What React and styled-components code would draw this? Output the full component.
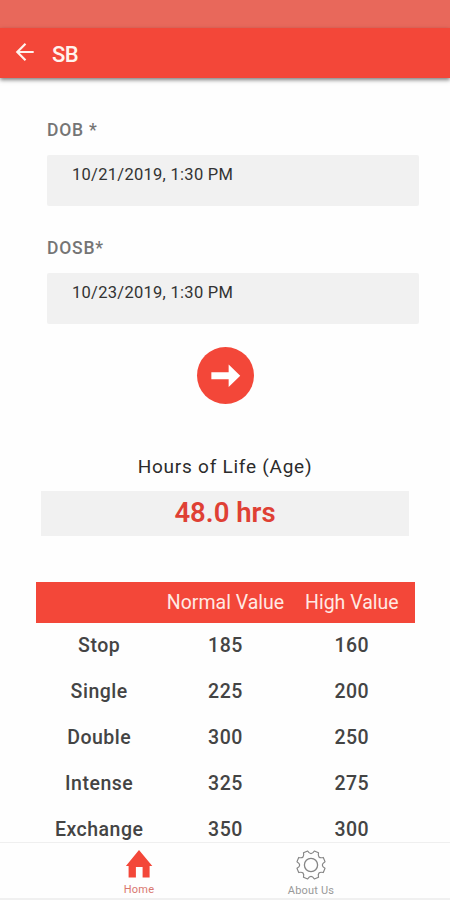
import React from "react";
import styled, { createGlobalStyle } from "styled-components";

const GlobalStyle = createGlobalStyle`
  * {
    box-sizing: border-box;
  }

  body {
    margin: 0;
    background: #fefefe;
    font-family: Roboto, "Liberation Sans", sans-serif;
  }
`;

const Screen = styled.div`
  display: flex;
  flex-direction: column;
  width: 450px;
  height: 900px;
  overflow: hidden;
  background: #fefefe;
`;

const StatusBar = styled.div`
  flex: none;
  height: 28px;
  background: #e8685b;
`;

const Toolbar = styled.header`
  flex: none;
  display: flex;
  align-items: center;
  height: 50px;
  padding-left: 15px;
  background: #f34739;
  box-shadow: 0 2px 4px rgba(0, 0, 0, 0.5);
  color: #fff3ee;

  svg {
    display: block;
    margin-top: -2px;
  }
`;

const Title = styled.h1`
  margin: 3px 0 0 17px;
  font-size: 22px;
  line-height: 26px;
  font-weight: 500;
  letter-spacing: -0.5px;
`;

const Content = styled.main`
  flex: 1;
  min-height: 0;
  overflow: hidden;
  padding-top: 41px;
`;

const Field = styled.div`
  height: 118px;
  padding: 0 31px 0 47px;
`;

const FieldLabel = styled.label`
  display: block;
  height: 36px;
  font-size: 17.5px;
  line-height: 22px;
  font-weight: 500;
  letter-spacing: 0.8px;
  color: #757575;
`;

const FieldValue = styled.div`
  height: 51px;
  padding: 9px 0 0 25px;
  border-radius: 2px;
  background: #f1f1f1;
  font-size: 16.5px;
  line-height: 22px;
  letter-spacing: 0.28px;
  color: #333;
`;

const SubmitButton = styled.button`
  display: block;
  width: 57px;
  height: 57px;
  margin: -8px auto 0;
  padding: 0;
  border: none;
  border-radius: 50%;
  background: #f34739;

  svg {
    display: block;
  }
`;

const ResultLabel = styled.div`
  margin-top: 51px;
  font-size: 19px;
  line-height: 24px;
  letter-spacing: 0.75px;
  text-align: center;
  color: #2b2b2b;
`;

const Result = styled.div`
  height: 45px;
  margin: 12px 41px 0;
  background: #f1f1f1;
  font-size: 27.5px;
  line-height: 43px;
  font-weight: 600;
  text-align: center;
  color: #df4034;
`;

const Table = styled.div`
  margin: 46px 35px 0 36px;
`;

const Row = styled.div`
  display: grid;
  grid-template-columns: repeat(3, 1fr);
  align-items: center;
  height: 45.8px;
  font-size: 19.5px;
  font-weight: 500;
  letter-spacing: 0.5px;
  text-align: center;
  color: #444;
`;

const HeaderRow = styled(Row)`
  height: 41px;
  background: #f34739;
  font-weight: 400;
  letter-spacing: 0;
  color: #ffe9e3;
`;

const TabBar = styled.nav`
  flex: none;
  display: grid;
  grid-template-columns: 1fr 1fr;
  height: 58px;
  padding: 0 53px;
  border-top: 1px solid #efefef;
  border-bottom: 2px solid #f0f0f0;
  background: #fefefe;
`;

const Tab = styled.a`
  display: flex;
  flex-direction: column;
  align-items: center;
  padding-top: ${(props) => (props.$active ? "6px" : "7px")};
  font-size: 11px;
  line-height: 14px;
  letter-spacing: 0.2px;
  color: ${(props) => (props.$active ? "#d9776f" : "#999")};

  svg {
    display: block;
    margin-bottom: 4px;
  }
`;

const rows = [
  { name: "Stop", normal: 185, high: 160 },
  { name: "Single", normal: 225, high: 200 },
  { name: "Double", normal: 300, high: 250 },
  { name: "Intense", normal: 325, high: 275 },
  { name: "Exchange", normal: 350, high: 300 },
];

function BackIcon() {
  return (
    <svg width="20" height="20" viewBox="0 0 20 20" fill="none">
      <path
        d="M18.7 10H2.5M10.5 1.8L2.3 10l8.2 8.2"
        stroke="#fff3ee"
        strokeWidth="2.2"
      />
    </svg>
  );
}

function ArrowIcon() {
  return (
    <svg width="57" height="57" viewBox="0 0 58 58">
      <path d="M14.6 25.6h17.6v-7.8L44 29.2 32.2 40.6v-7.8H14.6z" fill="#fff" />
    </svg>
  );
}

function HomeIcon() {
  return (
    <svg width="28" height="30" viewBox="0 0 28 30">
      <path
        d="M14 1L27.3 17H24.6v11.5h-7V18h-6.7v10.5H3.6V17H.9z"
        fill="#f34739"
      />
    </svg>
  );
}

// Eight shallow teeth around the rim, one notch curve between each pair
function GearIcon() {
  const point = (r, deg) => {
    const a = (deg * Math.PI) / 180;
    return `${(15 + r * Math.cos(a)).toFixed(2)} ${(15 + r * Math.sin(a)).toFixed(2)}`;
  };
  let d = `M${point(14.4, 13.5)}`;
  for (let i = 0; i < 8; i++) {
    const deg = 22.5 + i * 45;
    d += `L${point(14.4, deg + 9)}Q${point(8.6, deg + 22.5)} ${point(14.4, deg + 36)}`;
  }
  return (
    <svg width="30" height="30" viewBox="0 0 30 30" fill="none" stroke="#858585">
      <path d={`${d}Z`} strokeLinejoin="round" strokeWidth="1.2" />
      <circle cx="15" cy="15" r="6.6" strokeWidth="1.3" />
    </svg>
  );
}

export default function App() {
  return (
    <>
      <GlobalStyle />
      <Screen>
        <StatusBar />
        <Toolbar>
          <BackIcon />
          <Title>SB</Title>
        </Toolbar>
        <Content>
          <Field>
            <FieldLabel>DOB *</FieldLabel>
            <FieldValue>10/21/2019, 1:30 PM</FieldValue>
          </Field>
          <Field>
            <FieldLabel>DOSB*</FieldLabel>
            <FieldValue>10/23/2019, 1:30 PM</FieldValue>
          </Field>
          <SubmitButton>
            <ArrowIcon />
          </SubmitButton>
          <ResultLabel>Hours of Life (Age)</ResultLabel>
          <Result>48.0 hrs</Result>
          <Table>
            <HeaderRow>
              <span />
              <span>Normal Value</span>
              <span>High Value</span>
            </HeaderRow>
            {rows.map((row) => (
              <Row key={row.name}>
                <span>{row.name}</span>
                <span>{row.normal}</span>
                <span>{row.high}</span>
              </Row>
            ))}
          </Table>
        </Content>
        <TabBar>
          <Tab $active>
            <HomeIcon />
            Home
          </Tab>
          <Tab>
            <GearIcon />
            About Us
          </Tab>
        </TabBar>
      </Screen>
    </>
  );
}
